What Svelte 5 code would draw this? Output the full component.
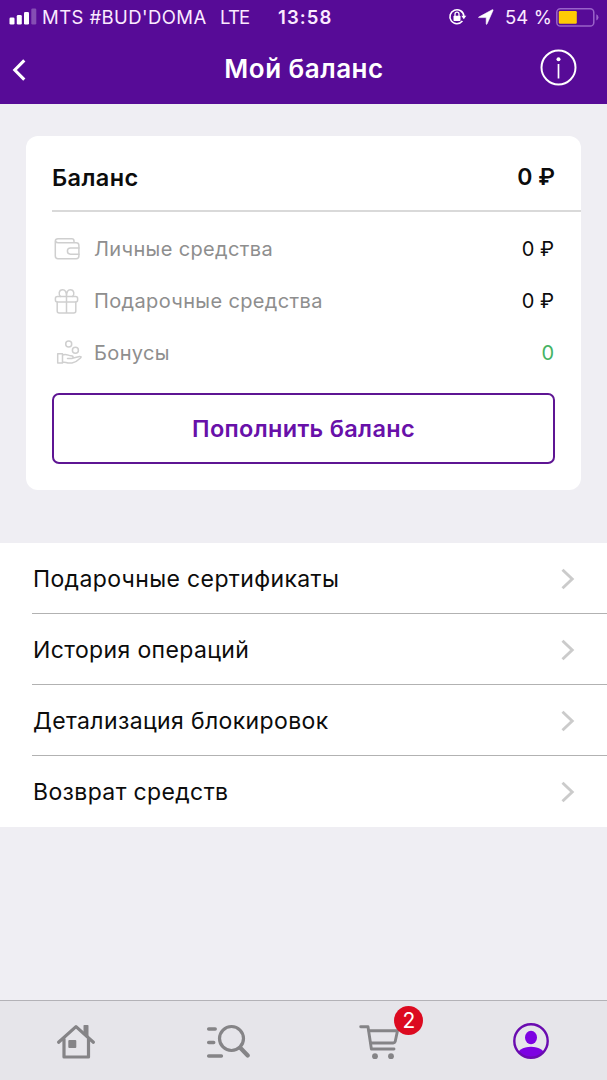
<script>
  const funds = [
    { icon: 'wallet', label: 'Личные средства', value: '0 ₽' },
    { icon: 'gift', label: 'Подарочные средства', value: '0 ₽' },
    { icon: 'bonus', label: 'Бонусы', value: '0' }
  ];
  const links = [
    'Подарочные сертификаты',
    'История операций',
    'Детализация блокировок',
    'Возврат средств'
  ];
</script>

<div class="screen">
  <header>
    <div class="status">
      <svg class="signal" width="28" height="17" viewBox="0 0 28 17">
        <g fill="#fff">
          <rect x="0.5" y="9.5" width="5" height="7" rx="1.3" />
          <rect x="7.8" y="7" width="5" height="9.5" rx="1.3" />
          <rect x="15" y="4" width="5" height="12.5" rx="1.3" />
          <rect x="22.3" y="0.5" width="5" height="16" rx="1.3" opacity=".28" />
        </g>
      </svg>
      <span class="carrier">MTS #BUD'DOMA</span>
      <span class="net">LTE</span>
      <span class="time">13:58</span>
      <svg class="lock" width="19" height="18" viewBox="0 0 19 18">
        <path d="M14.4 13.1A7 7 0 1 1 15.9 8" fill="none" stroke="#fff" stroke-width="1.6" />
        <path d="M13.3 7.7h5l-2.5 3.5z" fill="#fff" />
        <rect x="5.5" y="7.8" width="7" height="5.2" rx=".7" fill="#fff" />
        <path d="M7 8V6.2a2 2 0 0 1 4 0V8" fill="none" stroke="#fff" stroke-width="1.3" />
      </svg>
      <svg class="arrow" width="16" height="16" viewBox="0 0 16 16">
        <path d="M.7 8.100 14.200.8Q15.400.3 15 1.500L9 15Q8.400 16 8.200 14.700V8.600H1.400Q0 8.500.7 8.100Z" fill="#fff" stroke="#fff" stroke-width=".6" />
      </svg>
      <span class="percent">54 %</span>
      <svg class="battery" width="43" height="19" viewBox="0 0 43 19">
        <rect x=".8" y=".8" width="37" height="17.2" rx="3.6" fill="none" stroke="#9a63c9" stroke-width="1.5" />
        <rect x="2.8" y="3" width="18" height="12.8" rx="1.2" fill="#ffcb05" />
        <path d="M40.3 6.3q2.2 1 2.2 3.1t-2.2 3.1z" fill="#9a63c9" />
      </svg>
    </div>
    <div class="nav">
      <svg class="back" width="15" height="22" viewBox="0 0 15 22">
        <path d="M13.3 1.400 3.800 11l9.500 9.600" fill="none" stroke="#fff" stroke-width="3.100" />
      </svg>
      <h1>Мой баланс</h1>
      <svg class="info" width="37" height="37" viewBox="0 0 37 37">
        <circle cx="18.5" cy="18.5" r="17" fill="none" stroke="#fff" stroke-width="2" />
        <circle cx="18.5" cy="10.2" r="2" fill="#fff" />
        <path d="M18.5 15v14.5" stroke="#fff" stroke-width="1.7" />
      </svg>
    </div>
  </header>

  <section class="card">
    <div class="total"><span class="heading">Баланс</span><span>0 ₽</span></div>
    <div class="funds">
      {#each funds as f}
        <div class="fund">
          <svg width="30" height="28" viewBox="0 0 30 28" fill="none" stroke="#cfcfcf" stroke-width="1.5" stroke-linejoin="round" stroke-linecap="round">
            {#if f.icon === 'wallet'}
              <path d="M22 7.4V6q0-2.2-2.2-2.2H6Q3.300 3.800 3.300 6.300V21q0 2.700 2.700 2.700h18.200q2.700 0 2.700-2.700V10.400q0-2.700-2.700-2.700H6Q3.800 7.700 3.500 6" />
              <path d="M27 13H18.500a3.100 3.100 0 0 0 0 6.200H27" />
            {:else if f.icon === 'gift'}
              <rect x="3.400" y="9.500" width="22.200" height="5.500" rx="2" />
              <path d="M5.200 15v9q0 2 2 2h14.600q2 0 2-2v-9M14.500 9.500V26M14.500 9.500Q14.500 2.700 10.700 2.700C6.400 2.700 6.500 8 8.600 9.500M14.500 9.500Q14.500 2.700 18.300 2.700C22.600 2.700 22.500 8 20.400 9.500" />
            {:else}
              <circle cx="16.700" cy="4.900" r="3" />
              <circle cx="23.400" cy="11.300" r="3" />
              <path d="M5.700 14.700h4.800v9.300H5.700zM10.500 16c4-1.800 5.800.8 8.500.8 2.800 0 2.800 2.800 0 2.800h-3.500M20.300 19.200l7.200-1.800q2.500-.1 1 1.600-4.200 4.200-8.500 5h-4q-3-1.200-5.500-.7" />
            {/if}
          </svg>
          <span class="name">{f.label}</span>
          <span class="value" class:green={f.icon === 'bonus'}>{f.value}</span>
        </div>
      {/each}
    </div>
    <button>Пополнить баланс</button>
  </section>

  <nav class="list">
    {#each links as l}
      <div class="link">
        <span>{l}</span>
        <svg width="14" height="22" viewBox="0 0 14 22">
          <path d="M1.500 1.800 11.200 11l-9.700 9.200" fill="none" stroke="#cbcbcb" stroke-width="2.900" />
        </svg>
      </div>
    {/each}
  </nav>

  <footer>
    <div class="tab">
      <svg width="40" height="36" viewBox="0 0 40 36" fill="none" stroke="#858487" stroke-width="3.200" stroke-linecap="round" stroke-linejoin="round">
        <path d="M2.600 18.200 20 2.600l17.400 15.600M8 15v18h24.500V15" />
        <path d="M27.500 1.800q0-.8.800-.8h3.400q.8 0 .8.800V13L27.500 9z" fill="#858487" stroke="none" />
        <rect x="12.300" y="16" width="8" height="8" rx="1" fill="#858487" stroke="none" />
      </svg>
    </div>
    <div class="tab">
      <svg width="44" height="36" viewBox="0 0 44 36" fill="none" stroke="#858487" stroke-width="3.500" stroke-linecap="round">
        <path d="M2.700 5h6.500M2.700 18.500h5M2.700 32h12.700" />
        <circle cx="25.500" cy="14.500" r="12" stroke-width="3.200" />
        <path d="m34.500 24 7.200 7.500" stroke-width="4.200" />
      </svg>
    </div>
    <div class="tab">
      <div class="cart">
        <svg width="42" height="36" viewBox="0 0 42 36" fill="none" stroke="#858487" stroke-width="2.900" stroke-linejoin="round" stroke-linecap="round">
          <path d="M2.700 2.700h7.300l3.400 22.300H36" />
          <path d="M11 6.700h28.500l-2.300 10.800q-.5 1.500-2 1.500H13" />
          <circle cx="17" cy="32.200" r="2.900" fill="#858487" stroke="none" />
          <circle cx="33" cy="32.200" r="2.900" fill="#858487" stroke="none" />
        </svg>
        <b class="badge">2</b>
      </div>
    </div>
    <div class="tab user">
      <svg width="36" height="36" viewBox="0 0 36 36">
        <defs><clipPath id="ring"><circle cx="18" cy="18" r="17" /></clipPath></defs>
        <ellipse cx="18" cy="33.500" rx="14.500" ry="9.800" fill="#7d02e2" clip-path="url(#ring)" />
        <ellipse cx="18" cy="14.500" rx="6" ry="6.700" fill="#7d02e2" />
        <circle cx="18" cy="18" r="16.700" fill="none" stroke="#6a0bb0" stroke-width="2.400" />
      </svg>
    </div>
  </footer>
</div>

<style>
  :global(body) { background: #efeef3; }
  .screen {
    width: 607px;
    height: 1080px;
    display: flex;
    flex-direction: column;
    background: #efeef3;
    font-family: Inter, "Liberation Sans", sans-serif;
    color: #0c0c0c;
    overflow: hidden;
    white-space: nowrap;
  }
  header { height: 104px; background: #570b97; color: #fff; flex: none; }
  .status { display: flex; align-items: center; height: 34px; padding-left: 9px; font-size: 18.5px; color: #fbeaff; }
  .signal { margin-right: 5px; margin-top: -1px; }
  .carrier { width: 178px; letter-spacing: .42px; }
  .net { width: 58px; letter-spacing: -.8px; }
  .time { width: 170px; font-weight: 600; letter-spacing: 1.1px; }
  .arrow { margin: 0 11px 0 11px; }
  .percent { width: 51px; letter-spacing: .1px; }
  .nav { display: flex; align-items: center; height: 68px; padding: 0 30px 0 11px; }
  .back { margin-top: 4px; }
  h1 { flex: 1; margin: 0; padding-left: 42px; font-size: 26px; line-height: 69px; font-weight: 600; letter-spacing: .5px; text-align: center; }
  .info { margin-top: -1px; }
  .card { flex: none; height: 354px; margin: 32px 26px 0; box-sizing: border-box; background: #fff; border-radius: 12px; padding-left: 26px; }
  .total { display: flex; justify-content: space-between; height: 76px; padding-top: 4px; box-sizing: border-box; line-height: 75px; border-bottom: 2px solid #d9d9d9; padding-right: 26px; font-size: 23px; font-weight: 600; }
  .heading { font-size: 23.500px; letter-spacing: .4px; }
  .funds { padding: 11px 27px 0 0; }
  .fund { display: flex; align-items: center; height: 52px; font-size: 20px; }
  .name { flex: 1; margin-left: 12px; color: #8e8e8e; letter-spacing: .36px; }
  .green { color: #45b364; }
  button { display: block; width: 503px; height: 71px; margin-top: 14px; padding: 0; border: 2px solid #5e1593; border-radius: 7px; background: #fff; color: #6810a9; font: 600 23.500px Inter, sans-serif; letter-spacing: .32px; }
  .list { flex: none; margin-top: 53px; background: #fff; height: 284px; }
  .link { height: 71px; box-sizing: border-box; margin-left: 32px; padding: 1px 32px 0 1px; display: flex; align-items: center; justify-content: space-between; font-size: 23px; letter-spacing: .37px; border-bottom: 1px solid #b2b2b2; }
  .link:last-child { border-bottom-color: transparent; }
  footer { margin-top: auto; height: 80px; box-sizing: border-box; background: #e6e5ea; border-top: 1px solid #b3b2b7; display: grid; grid-template-columns: repeat(4, 1fr); }
  .tab { display: flex; align-items: center; justify-content: center; padding-top: 2px; }
  .user { padding-top: 0; }
  .cart { position: relative; display: flex; }
  .badge { position: absolute; left: 36px; top: -18px; width: 29px; height: 29px; border-radius: 50%; background: #dc0a20; color: #fff; text-align: center; font: 400 21px/29px Inter, sans-serif; }
</style>
